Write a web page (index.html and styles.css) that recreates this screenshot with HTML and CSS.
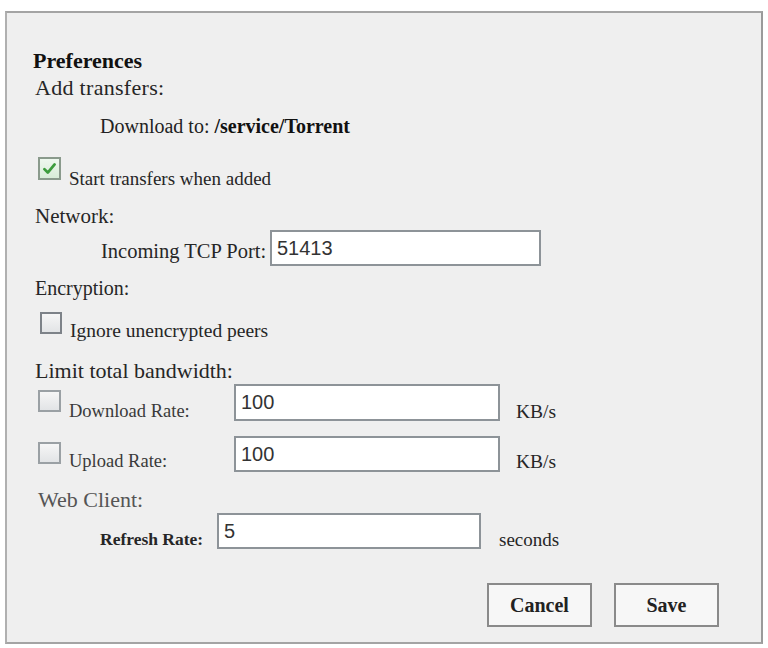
FILE: index.html
```html
<!DOCTYPE html>
<html>
<head>
<meta charset="utf-8">
<title>Preferences</title>
<link rel="stylesheet" href="styles.css">
</head>
<body>
<div class="panel">
  <div class="title">Preferences</div>
  <div class="section">Add transfers:</div>
  <div class="download-to">Download to: <b>/service/Torrent</b></div>
  <div class="check-row start-row">
    <span class="box checked"><svg viewBox="0 0 16 16" width="17" height="17"><path d="M3.2 8.6 L6.4 11.8 L12.8 4.2" fill="none" stroke="#3c9c3c" stroke-width="2.6" stroke-linecap="round" stroke-linejoin="round"/></svg></span>
    <span class="check-label">Start transfers when added</span>
  </div>
  <div class="section network">Network:</div>
  <div class="field-row tcp-row">
    <span class="field-label tcp-label">Incoming TCP Port:</span>
    <span class="input tcp-input">51413</span>
  </div>
  <div class="section encryption">Encryption:</div>
  <div class="check-row ignore-row">
    <span class="box"></span>
    <span class="check-label">Ignore unencrypted peers</span>
  </div>
  <div class="section limit">Limit total bandwidth:</div>
  <div class="rate-row">
    <span class="box rate-box"></span>
    <span class="rate-label">Download Rate:</span>
    <span class="input rate-input">100</span>
    <span class="unit">KB/s</span>
  </div>
  <div class="rate-row upload-row">
    <span class="box rate-box"></span>
    <span class="rate-label">Upload Rate:</span>
    <span class="input rate-input">100</span>
    <span class="unit">KB/s</span>
  </div>
  <div class="section web">Web Client:</div>
  <div class="refresh-row">
    <span class="refresh-label">Refresh Rate:</span>
    <span class="input refresh-input">5</span>
    <span class="unit seconds">seconds</span>
  </div>
  <div class="buttons">
    <span class="button">Cancel</span>
    <span class="button">Save</span>
  </div>
</div>
</body>
</html>
```
FILE: styles.css
```css
html, body {
  margin: 0;
  padding: 0;
  background: #ffffff;
}
body {
  font-family: "Liberation Serif", "Times New Roman", serif;
  color: #262626;
}
.panel {
  box-sizing: border-box;
  margin: 11px 0 0 5px;
  width: 758px;
  height: 633px;
  border: 2px solid #a4a4a4;
  border-right-color: #9a9a9a;
  border-left-color: #b0b0b0;
  background: #efefef;
  padding: 34px 0 0 26px;
}
.title {
  font-size: 22px;
  font-weight: bold;
  line-height: 27px;
  color: #111;
}
.section {
  font-size: 22px;
  line-height: 27px;
  padding-left: 2px;
  letter-spacing: 0.3px;
}
.download-to {
  font-size: 20px;
  line-height: 24px;
  margin-top: 13px;
  padding-left: 67px;
  color: #222;
}
.download-to b {
  color: #111;
}
.check-row {
  display: flex;
  align-items: flex-start;
  margin-top: 19px;
  padding-left: 5px;
}
.box {
  box-sizing: border-box;
  width: 23px;
  height: 23px;
  border: 2px solid #7d8288;
  background: linear-gradient(#f6f6f6, #e2e4e6);
  display: flex;
  align-items: center;
  justify-content: center;
  flex: none;
}
.box.checked {
  border-color: #8a9a8c;
  background: linear-gradient(#eef8ee, #d8ecd8);
}
.check-label {
  font-size: 19px;
  line-height: 22px;
  margin-top: 11px;
  margin-left: 8px;
}
.network {
  margin-top: 13px;
  font-size: 21px;
  line-height: 26px;
  letter-spacing: 0;
}
.field-row {
  display: flex;
  align-items: flex-start;
  margin-top: 1px;
}
.tcp-label {
  font-size: 20.5px;
  line-height: 24px;
  margin-top: 9px;
  margin-left: 68px;
  width: 169px;
  flex: none;
}
.input {
  box-sizing: border-box;
  background: #ffffff;
  border: 2px solid #8d9398;
  font-family: "Liberation Sans", Arial, sans-serif;
  font-size: 20px;
  color: #333;
  display: flex;
  align-items: center;
  padding-left: 5px;
  flex: none;
}
.tcp-input {
  width: 271px;
  height: 36px;
}
.encryption {
  margin-top: 10px;
  font-size: 20px;
  line-height: 24px;
  letter-spacing: 0;
}
.ignore-row {
  margin-top: 12px;
  padding-left: 7px;
}
.ignore-row .box {
  width: 22px;
  height: 22px;
}
.ignore-row .check-label {
  margin-top: 8px;
  font-size: 19.5px;
}
.limit {
  margin-top: 15px;
  letter-spacing: 0;
}
.rate-row {
  display: flex;
  align-items: flex-start;
  padding-left: 5px;
  height: 37px;
}
.upload-row {
  margin-top: 15px;
  height: 36px;
}
.rate-box {
  margin-top: 6px;
  width: 23px;
  height: 22px;
  border-color: #9aa0a4;
}
.rate-label {
  font-size: 18.5px;
  line-height: 22px;
  margin-top: 16px;
  margin-left: 8px;
  width: 165px;
  flex: none;
  color: #3a3a3a;
}
.upload-row .rate-label {
  margin-top: 14px;
}
.rate-input {
  width: 266px;
  height: 100%;
}
.unit {
  font-size: 19.5px;
  line-height: 22px;
  margin-top: 17px;
  margin-left: 16px;
}
.upload-row .unit {
  margin-top: 15px;
}
.web {
  margin-top: 15px;
  line-height: 26px;
  padding-left: 5px;
  color: #555;
  letter-spacing: 0;
}
.refresh-row {
  display: flex;
  align-items: flex-start;
  margin-top: 0;
  height: 36px;
}
.refresh-label {
  font-size: 17.5px;
  font-weight: bold;
  line-height: 22px;
  margin-top: 15px;
  margin-left: 67px;
  width: 117px;
  flex: none;
}
.refresh-input {
  width: 264px;
  height: 36px;
}
.seconds {
  margin-left: 18px;
  margin-top: 16px;
  font-size: 19px;
}
.buttons {
  display: flex;
  justify-content: flex-end;
  gap: 22px;
  margin-top: 34px;
  padding-right: 42px;
}
.button {
  box-sizing: border-box;
  width: 105px;
  height: 44px;
  border: 2px solid #8a8a8a;
  background: #f7f7f7;
  display: flex;
  align-items: center;
  justify-content: center;
  font-size: 20px;
  font-weight: bold;
  color: #222;
}
```
